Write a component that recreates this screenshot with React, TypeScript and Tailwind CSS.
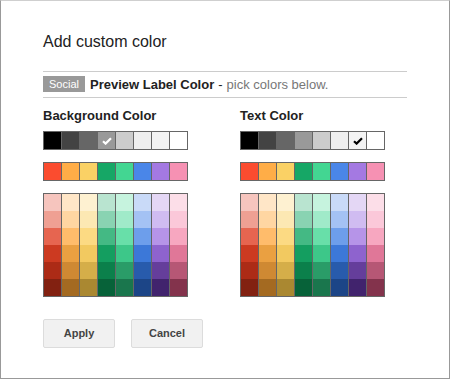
const grays = ["#000000", "#434343", "#666666", "#999999", "#cccccc", "#efefef", "#f3f3f3", "#ffffff"];
const brights = ["#fb4c2f", "#ffad47", "#fad165", "#16a766", "#43d692", "#4a86e8", "#a479e2", "#f691b3"];
const shades = [
  ["#f6c5be", "#ffe6c7", "#fef1d1", "#b9e4d0", "#c6f3de", "#c9daf8", "#e4d7f5", "#fcdee8"],
  ["#efa093", "#ffd6a2", "#fce8b3", "#89d3b2", "#a0eac9", "#a4c2f4", "#d0bcf1", "#fbc8d9"],
  ["#e66550", "#ffbc6b", "#fcda83", "#44b984", "#68dfa9", "#6d9eeb", "#b694e8", "#f7a7c0"],
  ["#cc3a21", "#eaa041", "#f2c960", "#149e60", "#3dc789", "#3c78d8", "#8e63ce", "#e07798"],
  ["#ac2b16", "#cf8933", "#d5ae49", "#0b804b", "#2a9c68", "#285bac", "#653e9b", "#b65775"],
  ["#822111", "#a46a21", "#aa8831", "#076239", "#1a764d", "#1c4587", "#41236d", "#83334c"],
];

const Check = ({ color }: { color: string }) => (
  <svg width="10" height="8" viewBox="0 0 10 8">
    <path d="M1 4.2 L3.6 6.6 L9 1.2" fill="none" stroke={color} strokeWidth="2.2" />
  </svg>
);

const Picker = ({ title, checked, checkColor }: { title: string; checked: number; checkColor: string }) => (
  <div className="w-[145px]">
    <div className="text-[13px] leading-[16px] font-bold text-[#222]">{title}</div>
    <div className="mt-[7px] grid grid-cols-[repeat(8,17px)] grid-rows-[17px] gap-x-px bg-[#666] p-px w-fit">
      {grays.map((c, i) => (
        <div key={c} className="flex items-center justify-center" style={{ backgroundColor: c }}>
          {i === checked && <Check color={checkColor} />}
        </div>
      ))}
    </div>
    <div className="mt-[12px] grid grid-cols-[repeat(8,17px)] grid-rows-[17px] gap-x-px bg-[#666] p-px w-fit">
      {brights.map((c) => (
        <div key={c} style={{ backgroundColor: c }} />
      ))}
    </div>
    <div className="mt-[12px] grid grid-cols-[repeat(8,17px)] auto-rows-[17px] gap-x-px bg-[#666] p-px w-fit">
      {shades.flat().map((c, i) => (
        <div key={i} style={{ backgroundColor: c }} />
      ))}
    </div>
  </div>
);

export default function App() {
  return (
    <div className="w-[450px] h-[379px] border border-[#999] border-t-[#cfcfcf] bg-white px-[42px] pt-[31px] font-['Liberation_Sans',Arial,sans-serif]">
      <div className="text-[16px] leading-[20px] text-[#222]">Add custom color</div>
      <div className="mt-[19px] border-t border-b border-[#ccc] h-[27px] flex items-center">
        <span className="bg-[#999] text-white text-[11px] leading-[16px] h-[16px] px-[6px] mt-[-1px]">Social</span>
        <span className="ml-[5px] text-[13px] font-bold text-[#222]">Preview Label Color</span>
        <span className="text-[13px] text-[#222] ml-[4px]">-</span>
        <span className="text-[13px] text-[#777] ml-[4px]">pick colors below.</span>
      </div>
      <div className="mt-[10px] flex gap-[52px]">
        <Picker title="Background Color" checked={3} checkColor="#ffffff" />
        <Picker title="Text Color" checked={6} checkColor="#000000" />
      </div>
      <div className="mt-[22px] flex gap-[16px]">
        <button className="w-[72px] h-[29px] bg-[#f1f1f1] border border-[#dcdcdc] rounded-[2px] text-[11px] font-bold text-[#444]">Apply</button>
        <button className="w-[72px] h-[29px] bg-[#f1f1f1] border border-[#dcdcdc] rounded-[2px] text-[11px] font-bold text-[#444]">Cancel</button>
      </div>
    </div>
  );
}
